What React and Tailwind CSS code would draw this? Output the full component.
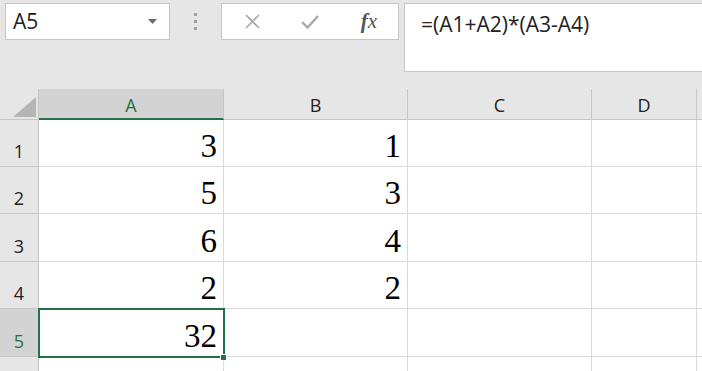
import React from 'react';

const rows = [
  { n: 1, h: 'h-[47px]', a: '3', b: '1' },
  { n: 2, h: 'h-[47px]', a: '5', b: '3' },
  { n: 3, h: 'h-[48px]', a: '6', b: '4' },
  { n: 4, h: 'h-[47px]', a: '2', b: '2' },
  { n: 5, h: 'h-[48px]', a: '32', b: '' },
  { n: 6, h: 'h-[47px]', a: '', b: '' },
];

const uiFont = { fontFamily: '"Open Sans", "Noto Sans", sans-serif' };
const serif = { fontFamily: '"Liberation Serif", "Times New Roman", serif' };

const Toolbar = () => (
  <div className="flex h-[89px] items-start pt-[3px]" style={uiFont}>
    <div className="ml-[5px] flex h-[37px] w-[165px] items-center justify-between border border-[#c6c6c6] bg-white pl-[7px] pr-[12px]">
      <span className="text-[21px] leading-none text-[#222]">A5</span>
      <svg width="9" height="5" viewBox="0 0 9 5">
        <path d="M0 0 L9 0 L4.5 5 Z" fill="#6b6b6b" />
      </svg>
    </div>
    <div className="flex h-[37px] w-[51px] flex-col items-center justify-center gap-[4px]">
      <div className="h-[3px] w-[3px] bg-[#a0a0a0]" />
      <div className="h-[3px] w-[3px] bg-[#a0a0a0]" />
      <div className="h-[3px] w-[3px] bg-[#a0a0a0]" />
    </div>
    <div className="flex h-[37px] w-[178px] items-center border border-[#c6c6c6] bg-white">
      <div className="flex w-[58px] justify-center pl-[2px]">
        <svg width="15" height="15" viewBox="0 0 15 15">
          <path d="M1 1 L14 14 M14 1 L1 14" stroke="#a8a8a8" strokeWidth="1.6" fill="none" />
        </svg>
      </div>
      <div className="flex w-[60px] justify-center">
        <svg width="18" height="15" viewBox="0 0 18 15">
          <path d="M1 8 L6.5 13.5 L17 2" stroke="#a8a8a8" strokeWidth="2.4" fill="none" />
        </svg>
      </div>
      <div className="flex w-[58px] justify-center">
        <span className="text-[21px] italic leading-none text-[#555]" style={serif}>
          <span className="font-bold">f</span>x
        </span>
      </div>
    </div>
    <div className="ml-[5px] h-[69px] flex-1 border border-r-0 border-[#c6c6c6] bg-white pl-[16px] pt-[10px]">
      <span className="text-[21px] leading-none text-[#222]">=(A1+A2)*(A3-A4)</span>
    </div>
  </div>
);

const NumCell = ({ value, h, width }) => (
  <div className={`flex ${h} ${width} items-end justify-end border-b border-r border-[#dadada] bg-white pb-[3px] pr-[6px]`}>
    <span className="text-[33px] leading-none text-black" style={serif}>{value}</span>
  </div>
);

export default function App() {
  return (
    <div className="h-[371px] w-[702px] overflow-hidden bg-[#e6e6e6]">
      <Toolbar />
      <div style={uiFont}>
        <div className="flex h-[31px]">
          <div className="relative w-[39px] border-b border-r border-[#c6c6c6] bg-[#e6e6e6]">
            <svg className="absolute left-[13px] top-[8px]" width="24" height="20" viewBox="0 0 24 20">
              <path d="M23 0 L23 20 L0 20 Z" fill="#b5b5b5" />
            </svg>
          </div>
          <div className="flex w-[185px] items-center justify-center border-b-2 border-r border-b-[#217346] border-r-[#c6c6c6] bg-[#d3d3d3] pt-[3px] text-[18px] text-[#217346]">A</div>
          <div className="flex w-[184px] items-center justify-center border-b border-r border-[#c6c6c6] pt-[3px] text-[18px] text-[#222]">B</div>
          <div className="flex w-[184px] items-center justify-center border-b border-r border-[#c6c6c6] pt-[3px] text-[18px] text-[#222]">C</div>
          <div className="flex w-[105px] items-center justify-center border-b border-r border-[#c6c6c6] pt-[3px] text-[18px] text-[#222]">D</div>
          <div className="flex-1 border-b border-[#c6c6c6]" />
        </div>
        {rows.map((r) => (
          <div key={r.n} className="flex">
            <div
              className={`flex ${r.h} w-[39px] items-end justify-center border-b border-r border-[#c6c6c6] pb-[6px] text-[18px] leading-none ${
                r.n === 5 ? 'bg-[#d3d3d3] text-[#217346]' : 'bg-[#e6e6e6] text-[#222]'
              }`}
            >
              {r.n < 6 ? r.n : ''}
            </div>
            {r.n === 5 ? (
              <div className="relative">
                <NumCell value={r.a} h={r.h} width="w-[185px]" />
                <div className="absolute inset-[-1px] border-2 border-[#217346]" />
                <div className="absolute bottom-[-4px] right-[-3px] h-[7px] w-[7px] border border-white bg-[#217346]" />
              </div>
            ) : (
              <NumCell value={r.a} h={r.h} width="w-[185px]" />
            )}
            <NumCell value={r.b} h={r.h} width="w-[184px]" />
            <NumCell value="" h={r.h} width="w-[184px]" />
            <NumCell value="" h={r.h} width="w-[105px]" />
            <div className={`${r.h} flex-1 border-b border-[#dadada] bg-white`} />
          </div>
        ))}
      </div>
    </div>
  );
}
